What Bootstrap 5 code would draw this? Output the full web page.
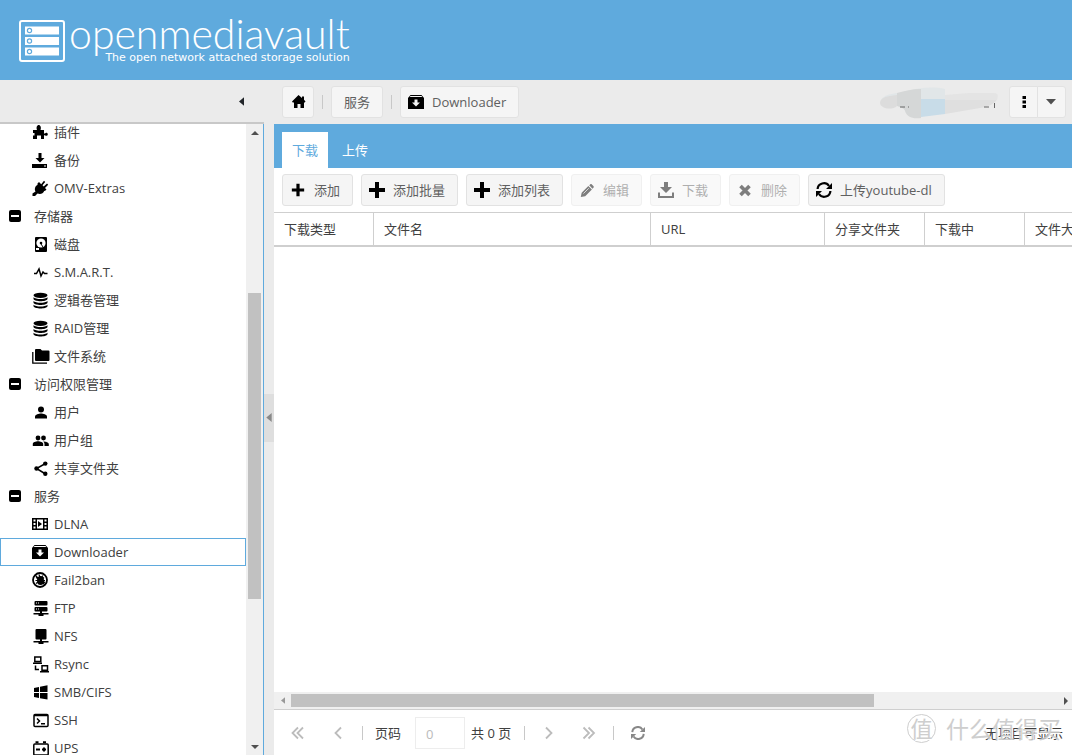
<!DOCTYPE html>
<html lang="zh-CN">
<head>
<meta charset="utf-8">
<meta name="viewport" content="width=device-width, initial-scale=1">
<title>openmediavault</title>
<link href="https://cdn.jsdelivr.net/npm/bootstrap@5.3.0/dist/css/bootstrap.min.css" rel="stylesheet">
<style>
:root { --omv-blue: #5faadd; --omv-line: #cfcfcf; }
body { font-family: "Open Sans", "Noto Sans CJK SC", sans-serif; font-size: 13px; line-height: 20px; color: #404040; background: #ebebeb; }
svg { display: block; flex: none; }
a { color: inherit; text-decoration: none; }
.masthead { height: 80px; flex: none; background: var(--omv-blue); color: #fff; padding: 2px 19px 0; }
.brand-name { font-family: Lato, sans-serif; font-weight: 300; font-size: 41px; line-height: 30px; padding-bottom: 3px; }
.brand-tag { font-family: "DejaVu Sans", sans-serif; font-size: 11px; line-height: 12px; }
.side { width: 264px; }
.bar { height: 44px; flex: none; }
.side .bar { border-bottom: 2px solid #c8c8c8; padding-right: 20px; }
.side .bar .flat { width: auto; }
.tree-wrap { border-right: 1px solid var(--omv-blue); background: #fff; }
.tree { margin-top: -6px; }
.tree a { height: 28px; border: 1px solid transparent; padding-left: 31px; gap: 5px; }
.tree a.group { padding-left: 5px; gap: 11px; }
.tree a.picked { border-color: var(--omv-blue); }
.tree svg { width: 17px; height: 17px; color: #000; }
.scroll-v { width: 17px; background: #f0f0f0; flex: none; }
.scroll-h { height: 18px; background: #f0f0f0; border-bottom: 1px solid var(--omv-line); flex: none; }
.arrow { width: 17px; height: 17px; border: 0; padding: 0; background: none; flex: none; display: flex; align-items: center; justify-content: center; color: #505050; }
.thumb { background: #c1c1c1; }
.scroll-v .thumb { margin: 0 2px; }
.scroll-h .thumb { margin: 2px 0; }
.g1 { flex: 152 1 0; } .g2 { flex: 305 1 0; } .g3 { flex: 139 1 0; }
.h1w { flex: 583 1 0; } .h2w { flex: 181 1 0; }
.splitter { width: 10px; }
.splitter button { width: 10px; height: 48px; border: 0; padding: 0 0 0 2px; background: #dedede; color: #888; }
.omv-btn { --bs-btn-font-size: 13px; --bs-btn-line-height: 20px; --bs-btn-padding-x: 0; --bs-btn-padding-y: 0; --bs-btn-border-radius: 3px;
  --bs-btn-bg: #f5f5f5; --bs-btn-border-color: #e2e2e2; --bs-btn-color: #606060;
  --bs-btn-disabled-bg: #f5f5f5; --bs-btn-disabled-border-color: #e2e2e2; --bs-btn-disabled-color: #606060; --bs-btn-disabled-opacity: .5;
  height: 32px; padding: 0 12px 0 7px; display: inline-flex; align-items: center; gap: 8px; white-space: nowrap; flex: none; }
.omv-btn svg { color: #000; }
.omv-btn.square { padding: 0 7px; }
.btn-group .omv-btn.square { padding: 0 6px; flex: none; }
.omv-btn.plain { padding: 0 12px; }
.sep { width: 1px; height: 14px; background: #c8c8c8; flex: none; }
.account { padding-right: 6px; }
.tabs { height: 44px; background: var(--omv-blue); padding: 8px 8px 0; gap: 4px; flex: none; }
.tabs .nav-link { height: 36px; padding: 8px 10px; color: #fff; border-radius: 0; }
.tabs .nav-link.active { background: #fff; color: var(--omv-blue); }
.tools { height: 44px; padding: 0 8px; flex: none; }
.grid-head { width: 851px; table-layout: fixed; border-top: 1px solid var(--omv-line); border-bottom: 2px solid var(--omv-line); border-collapse: separate; border-spacing: 0; }
.grid-head th { height: 32px; padding: 0 10px; font-weight: 400; border-right: 1px solid var(--omv-line); white-space: nowrap; }
.pager { height: 45px; padding: 0 9px 0 16px; flex: none; }
.pager .form-control { width: 50px; height: 32px; border: 1px solid #ededed; border-radius: 0; padding: 2px 10px 0; font-size: 13px; color: #bbb; }
.pager label { margin-right: 14px; }
.pager .total { margin: 0 13px 0 6px; }
.flat { border: 0; background: none; padding: 0; color: #bcbcbc; width: 16px; }
.stamp { position: absolute; right: 11px; bottom: 12px; color: #c9c9c9; gap: 10px; pointer-events: none; opacity: .9; text-shadow: 1px 1px 0 #fff; }
.stamp .ring { width: 29px; height: 29px; border: 1px solid #c9c9c9; border-radius: 50%; font-size: 22px; line-height: 26px; text-align: center; }
.stamp .words { font-size: 23px; line-height: 28px; }
</style>
</head>
<body class="vh-100 d-flex flex-column overflow-hidden">

<svg width="0" height="0" class="position-absolute" aria-hidden="true">
  <symbol id="tri-l" viewBox="0 0 6 10"><path fill="currentColor" d="M6 0v10L0 5z"/></symbol>
  <symbol id="plus" viewBox="0 0 16 16"><path fill="currentColor" d="M6 0h4v6h6v4h-6v6H6v-6H0V6h6z"/></symbol>
  <symbol id="box" viewBox="0 0 16 16"><path fill="currentColor" fill-rule="evenodd" d="M2.500 1h11L16 4v11H0V4zM2.500 2 1.700 3h12.600l-.8-1zM6.500 5.500v3H4L8 12.500l4-4H9.500v-3z"/></symbol>
  <symbol id="dl" viewBox="0 0 16 16"><path fill="currentColor" d="M6 0h4v5h4l-6 6-6-6h4zM0 10.500h2V14h12v-3.500h2V16H0z"/></symbol>
  <symbol id="sync" viewBox="0 0 16 16"><path fill="none" stroke="currentColor" stroke-width="2.200" d="M1.600 7A6.200 6 0 0 1 13 4M14.400 9A6.200 6 0 0 1 3 12"/><path fill="currentColor" d="M16 1v6h-6zM0 15V9h6z"/></symbol>
  <symbol id="minus" viewBox="0 0 17 17"><rect x="3" y="2" width="12" height="12" rx="2" fill="#000"/><path fill="#fff" d="M5 7h8v2H5z"/></symbol>
  <symbol id="db" viewBox="0 0 17 17"><ellipse cx="8.500" cy="3.300" rx="7" ry="2.600"/><path d="M1.500 5.200c2 2.400 12 2.400 14 0v1.800c-1 3-13 3-14 0zM1.500 9c2 2.400 12 2.400 14 0v1.800c-1 3-13 3-14 0zM1.500 12.700c2 2.400 12 2.400 14 0v1.600c-1 3-13 3-14 0z"/></symbol>
</svg>

<header class="masthead d-flex align-items-center">
  <svg width="46" height="42" viewBox="0 0 46 42"><rect x="1" y="1" width="44" height="40" rx="2" fill="none" stroke="#fff" stroke-width="2"/><path fill="#fff" d="M6 6.500h34v8H6zM6 17h34v8H6zM6 27.500h34v8H6z"/><g fill="#fff" stroke="#5faadd" stroke-width="1.200"><circle cx="10.500" cy="10.500" r="2.100"/><circle cx="10.500" cy="21" r="2.100"/><circle cx="10.500" cy="31.500" r="2.100"/></g></svg>
  <div class="d-flex flex-column align-items-end ps-1">
    <div class="brand-name">openmediavault</div>
    <div class="brand-tag">The open network attached storage solution</div>
  </div>
</header>

<div class="d-flex flex-grow-1 overflow-hidden">
  <aside class="side d-flex flex-column flex-shrink-0">
    <div class="bar d-flex align-items-center justify-content-end">
      <button class="flat" type="button" aria-label="折叠"><svg width="5" height="9" class="text-dark"><use href="#tri-l"/></svg></button>
    </div>
    <div class="tree-wrap d-flex flex-grow-1 overflow-hidden">
      <nav class="tree flex-grow-1">
        <a href="#" class="d-flex align-items-center"><svg viewBox="0 0 17 17"><path d="M1 6h4C4 3.500 5 1 6.700 1S9.500 3.500 8.500 6H12v3.500h1c.8-1.200 2.800-.8 2.800.8s-2 2-2.800.9h-1V15H9v-3.500H5V15H1v-3.500h1.500V9H1z"/></svg>插件</a>
        <a href="#" class="d-flex align-items-center"><svg viewBox="0 0 17 17"><path d="M6.500 1h3v5h3L8 10.500 3.500 6h3zM0 12h15v4H0z"/><path fill="#fff" d="M12 13.500h2v1h-2z"/></svg>备份</a>
        <a href="#" class="d-flex align-items-center"><svg viewBox="0 0 17 17"><path d="m5.500 3.500 1.500-1.500 2.200 2.200L12 .8l1.200 1.200-2.700 3.300 1.200 1.200L15 3.500l1.200 1.200-3.200 3.200 1.500 1.600-1.300 1.300-1 .2c-1 2.700-4 3.600-6.700 2.500L3 16H.5v-2.500L3.500 11.500C2 9 3.500 5.500 5.500 5z"/></svg>OMV-Extras</a>
        <a href="#" class="group d-flex align-items-center"><svg><use href="#minus"/></svg>存储器</a>
        <a href="#" class="d-flex align-items-center"><svg viewBox="0 0 17 17"><rect x="3" y="1" width="12" height="15" rx="1"/><circle cx="9" cy="7" r="4.600" fill="#fff"/><circle cx="9" cy="7" r="1.300"/><path fill="none" stroke="#000" d="m9 8 4 6"/><path fill="#fff" d="M4 12h3v2H4z"/></svg>磁盘</a>
        <a href="#" class="d-flex align-items-center"><svg viewBox="0 0 17 17"><path fill="none" stroke="#000" stroke-width="1.500" d="M2 9.500h2.500L7 5l2 7 2-4 1.500 1.500H15.500"/></svg>S.M.A.R.T.</a>
        <a href="#" class="d-flex align-items-center"><svg><use href="#db"/></svg>逻辑卷管理</a>
        <a href="#" class="d-flex align-items-center"><svg><use href="#db"/></svg>RAID管理</a>
        <a href="#" class="d-flex align-items-center"><svg viewBox="0 0 17 17" overflow="visible"><path d="M4 1h4.500L10 2.500h6.500q1 0 1 1V12q0 1-1 1H4q-1 0-1-1V2q0-1 1-1z"/><path fill="none" stroke="#000" stroke-width="1.300" d="M.8 4v11.200H15"/></svg>文件系统</a>
        <a href="#" class="group d-flex align-items-center"><svg><use href="#minus"/></svg>访问权限管理</a>
        <a href="#" class="d-flex align-items-center"><svg viewBox="0 0 17 17"><circle cx="9" cy="5.500" r="3"/><path d="M3 14.500v-2c0-2 4-3 6-3s6 1 6 3v2z"/></svg>用户</a>
        <a href="#" class="d-flex align-items-center"><svg viewBox="0 0 17 17"><circle cx="6" cy="6" r="2.400"/><circle cx="11.500" cy="6" r="2.400"/><path d="M.8 14v-2c0-1.800 3-2.700 5.200-2.700s5.200.9 5.200 2.700v2zM12.500 14v-2c0-1-.4-1.900-1.200-2.600 2.300 0 5.500.9 5.500 2.600v2z"/></svg>用户组</a>
        <a href="#" class="d-flex align-items-center"><svg viewBox="0 0 17 17"><path fill="none" stroke="#000" stroke-width="1.500" d="m13.500 3.500-9 5 9 5.500"/><circle cx="13.300" cy="3.600" r="2.200"/><circle cx="4.500" cy="8.500" r="2.200"/><circle cx="13.300" cy="13.800" r="2.200"/></svg>共享文件夹</a>
        <a href="#" class="group d-flex align-items-center"><svg><use href="#minus"/></svg>服务</a>
        <a href="#" class="d-flex align-items-center"><svg viewBox="0 0 17 17"><path d="M0 2h16v12H0z"/><path fill="#fff" d="M5 3.500h6v9H5zM1.500 3.500h2v2h-2zM1.500 7h2v2h-2zM1.500 10.500h2v2h-2zM12.500 3.500h2v2h-2zM12.500 7h2v2h-2zM12.500 10.500h2v2h-2z"/><path d="m6 5 4 3-4 3z"/></svg>DLNA</a>
        <a href="#" class="picked d-flex align-items-center" aria-current="page"><svg><use href="#box" width="16" height="16"/></svg>Downloader</a>
        <a href="#" class="d-flex align-items-center"><svg viewBox="0 0 17 17"><circle cx="8" cy="8" r="7" fill="none" stroke="#000" stroke-width="1.800"/><ellipse cx="8.500" cy="8.500" rx="3.500" ry="4.500"/><path fill="none" stroke="#000" stroke-width="1.200" d="m3 3 10 10M4 5.500l9 5M3.500 8.500h9.500M4 11.500l8-6M7 2.500l1 3M11 3.500 9.500 5.500"/></svg>Fail2ban</a>
        <a href="#" class="d-flex align-items-center"><svg viewBox="0 0 17 17"><rect x="2.500" y="1" width="13" height="4.500" rx="1"/><rect x="2.500" y="7" width="13" height="4.500" rx="1"/><path d="M8 11h2v2h6.500v1.500h-5v1.500h-5v-1.500h-5V13H8z"/><path fill="#fff" d="M4 2.500h1v1H4zM6 2.500h1v1H6zM4 8.500h1v1H4zM6 8.500h1v1H6z"/></svg>FTP</a>
        <a href="#" class="d-flex align-items-center"><svg viewBox="0 0 17 17"><rect x="3.500" y="1" width="11" height="10.500" rx="1"/><path d="M8 11h2v2h6.500v1.500h-5v1.500h-5v-1.500h-5V13H8z"/></svg>NFS</a>
        <a href="#" class="d-flex align-items-center"><svg viewBox="0 0 17 17" fill="none" stroke="#000" stroke-width="1.500"><path d="M2.800 1h6v4.500h-6zM1 7.300h9M10 9.800h5.500v4.400H10zM8 15.700h9M3.500 9.500v4H7"/></svg>Rsync</a>
        <a href="#" class="d-flex align-items-center"><svg viewBox="0 0 17 17"><path d="m2 4 5-1v5H2zM8 2.800l7.500-1.500V8H8zM2 9h5v5l-5-1zM8 9h7.500v6.500L8 14.200z"/></svg>SMB/CIFS</a>
        <a href="#" class="d-flex align-items-center"><svg viewBox="0 0 17 17" fill="none" stroke="#000" stroke-width="1.500"><rect x="2" y="2.500" width="14" height="12" rx="1"/><path d="M2 3.500h14M5 6.500 7.500 9 5 11.500M9 11.800h4"/></svg>SSH</a>
        <a href="#" class="d-flex align-items-center"><svg viewBox="0 0 17 17" fill="none" stroke="#000" stroke-width="1.500"><rect x="1.800" y="4" width="14.400" height="11" rx="1"/><path d="M3.500 2.200h3M11 2.200h3M4 9.500h4M10 9.500h4M12 7.500v4" stroke-width="2"/></svg>UPS</a>
      </nav>
      <div class="scroll-v d-flex flex-column">
        <button class="arrow" type="button" aria-label="向上"><svg width="8" height="4" viewBox="0 0 8 4"><path fill="currentColor" d="M0 4h8L4 0z"/></svg></button>
        <div class="g1"></div><div class="thumb g2"></div><div class="g3"></div>
        <button class="arrow" type="button" aria-label="向下"><svg width="8" height="4" viewBox="0 0 8 4"><path fill="currentColor" d="M0 0h8L4 4z"/></svg></button>
      </div>
    </div>
  </aside>

  <div class="splitter d-flex align-items-center flex-shrink-0">
    <button type="button" aria-label="收起侧栏"><svg width="6" height="9"><use href="#tri-l"/></svg></button>
  </div>

  <main class="d-flex flex-column flex-grow-1 overflow-hidden">
    <div class="bar account d-flex align-items-center justify-content-between ps-2">
      <nav class="d-flex align-items-center gap-2" aria-label="路径">
        <button class="btn omv-btn square" type="button" aria-label="首页"><svg width="16" height="16" viewBox="0 0 16 16"><path d="M8.500 1 12 4V2.500h2v3.300l1.500 1.700-1 1.200-.5-.4V14h-3.500v-4h-3v4H4V8.300l-1 .4-1-1.200z"/></svg></button>
        <span class="sep"></span>
        <button class="btn omv-btn plain" type="button">服务</button>
        <span class="sep"></span>
        <button class="btn omv-btn" type="button"><svg width="16" height="16"><use href="#box"/></svg>Downloader</button>
      </nav>
      <div class="d-flex align-items-center gap-2">
        <svg width="124" height="34" viewBox="0 0 124 34"><path fill="#e1e6e8" d="M4 15C8 8 20 9 30 6c12-3 25-5 38-2v10H43z"/><path fill="#dcdcdc" d="M4 15c3-4 9-4 16-5v11c-3 3-8 3-12 2-5-2-6-5-4-8z"/><path fill="#d5d7d7" d="M20 8c8-2 15-4 24-4v29c-9 1-14-1-16-7 0-2-4-4-8-5z"/><path fill="#c8dce8" d="M44 14h24v15l-24 3z"/><path fill="#dfdfdf" d="M68 14h52c-1 4-9 8-17 9l-35 6z"/><path fill="#e4e4e4" d="M68 10l24-2h25c5 0 4 4 3 7H68z"/><path stroke="#666" d="M23 22h5M31 22h1M107 22h5M117.500 18v5"/></svg>
        <div class="btn-group">
          <button class="btn omv-btn square" type="button" aria-label="更多"><svg width="15" height="16" viewBox="0 0 15 16"><path d="M6.500 2h3.500v3H6.500zM6.500 6.500H10v3H6.500zM6.500 11H10v3H6.500z"/></svg></button>
          <button class="btn omv-btn square" type="button" aria-label="菜单"><svg width="15" height="6" viewBox="0 0 15 6"><path fill="#505050" d="M2 0h10L7 5.500z"/></svg></button>
        </div>
      </div>
    </div>

    <section class="d-flex flex-column flex-grow-1 overflow-hidden bg-white position-relative">
      <ul class="nav tabs">
        <li class="nav-item"><a class="nav-link active" href="#">下载</a></li>
        <li class="nav-item"><a class="nav-link" href="#">上传</a></li>
      </ul>
      <div class="tools d-flex align-items-center gap-2">
        <button class="btn omv-btn" type="button"><svg width="16" height="16" viewBox="-2 -2 20 20"><use href="#plus" width="16" height="16"/></svg>添加</button>
        <button class="btn omv-btn" type="button"><svg width="16" height="16"><use href="#plus"/></svg>添加批量</button>
        <button class="btn omv-btn" type="button"><svg width="16" height="16"><use href="#plus"/></svg>添加列表</button>
        <button class="btn omv-btn" type="button" disabled><svg width="16" height="16" viewBox="-1 -2 18 18"><path d="m1 15 1-5 7.500-7.500 4 4L6 14zM10.500 1.700l1-.9c.7-.7 1.400-.5 2 0l1.700 1.700c.6.700.7 1.300 0 2l-1 1z"/><path stroke="#fff" stroke-width=".8" d="m4 11 6-6"/></svg>编辑</button>
        <button class="btn omv-btn" type="button" disabled><svg width="16" height="16"><use href="#dl"/></svg>下载</button>
        <button class="btn omv-btn" type="button" disabled><svg width="16" height="16" viewBox="0 0 16 16"><path stroke="#000" stroke-width="3.600" d="m3.500 4 9 9m0-9-9 9"/></svg>删除</button>
        <button class="btn omv-btn" type="button"><svg width="16" height="16"><use href="#sync"/></svg>上传youtube-dl</button>
      </div>
      <div class="flex-grow-1 overflow-hidden">
        <table class="grid-head">
          <colgroup><col style="width:100px"><col style="width:277px"><col style="width:174px"><col style="width:100px"><col style="width:100px"><col style="width:100px"></colgroup>
          <thead><tr><th>下载类型</th><th>文件名</th><th>URL</th><th>分享文件夹</th><th>下载中</th><th>文件大小</th></tr></thead>
        </table>
      </div>
      <div class="scroll-h d-flex">
        <button class="arrow" type="button" aria-label="向左"><svg width="4" height="7" style="color:#999"><use href="#tri-l"/></svg></button>
        <div class="thumb h1w"></div><div class="h2w"></div>
        <button class="arrow justify-content-end pe-1" type="button" aria-label="向右"><svg width="4" height="8" viewBox="0 0 4 8"><path fill="currentColor" d="M0 0v8l4-4z"/></svg></button>
      </div>
      <div class="pager d-flex align-items-center justify-content-between">
        <div class="d-flex align-items-center">
          <button class="flat" type="button" aria-label="第一页"><svg width="16" height="16" viewBox="0 0 16 16" fill="none" stroke="currentColor" stroke-width="1.800"><path d="M8 2.500 2.500 8 8 13.500M13 2.500 7.500 8l5.500 5.500"/></svg></button>
          <button class="flat ms-4" type="button" aria-label="上一页"><svg width="16" height="16" viewBox="0 0 16 16" fill="none" stroke="currentColor" stroke-width="1.800"><path d="M11 2.500 5.500 8l5.500 5.500"/></svg></button>
          <span class="sep ms-3 me-2"></span>
          <label for="page" class="ps-1">页码</label>
          <input id="page" class="form-control" value="0">
          <span class="total">共 0 页</span>
          <span class="sep me-2"></span>
          <button class="flat ms-2" type="button" aria-label="下一页"><svg width="16" height="16" viewBox="0 0 16 16" fill="none" stroke="currentColor" stroke-width="1.800"><path d="m5 2.500 5.500 5.500L5 13.500"/></svg></button>
          <button class="flat ms-4" type="button" aria-label="最后一页"><svg width="16" height="16" viewBox="0 0 16 16" fill="none" stroke="currentColor" stroke-width="1.800"><path d="M2.500 2.500 8 8l-5.500 5.500M7.500 2.500 13 8l-5.500 5.500"/></svg></button>
          <span class="sep mx-3"></span>
          <button class="flat" type="button" aria-label="刷新"><svg width="16" height="16" viewBox="-1 -1 18 18" style="color:#888"><use href="#sync" width="16" height="16"/></svg></button>
        </div>
        <span>无项目可显示</span>
      </div>
      <div class="stamp d-flex align-items-center"><span class="ring">值</span><span class="words">什么值得买</span></div>
    </section>
  </main>
</div>
<script src="https://cdn.jsdelivr.net/npm/bootstrap@5.3.0/dist/js/bootstrap.bundle.min.js"></script>
</body>
</html>
